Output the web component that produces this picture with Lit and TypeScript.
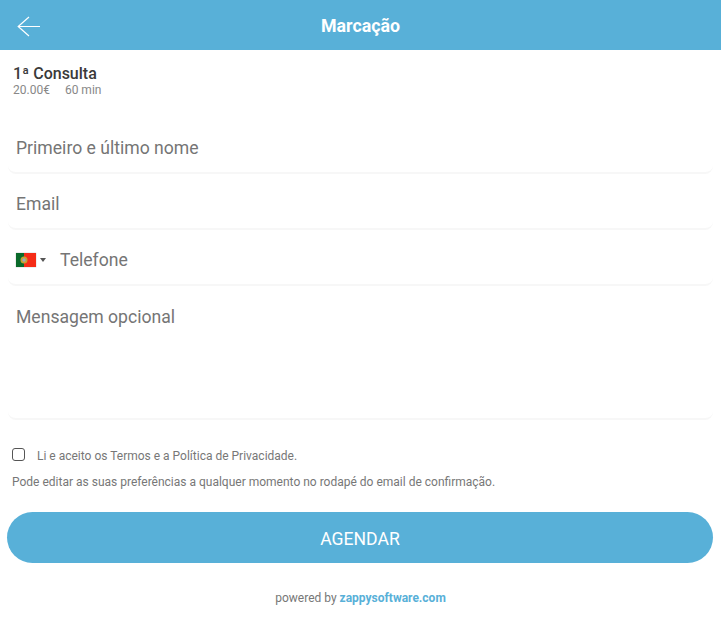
import {customElement} from "lit/decorators.js";
import {css, html, LitElement} from "lit";

@customElement('app-root')
class AppRoot extends LitElement {
    static styles = [css`
        :host {
            display: block;
            font-family: Roboto, "Liberation Sans", sans-serif;
            color: #777;
            background: #fff;
        }
        .topbar {
            height: 50px;
            background: #58b0d8;
            display: flex;
            align-items: center;
            justify-content: center;
            position: relative;
            color: #fff;
            font-size: 17.8px;
            font-weight: 700;
        }
        .back {
            position: absolute;
            left: 17px;
            top: 16px;
            width: 24px;
            height: 21px;
        }
        .service {
            padding: 14px 13px 0;
            height: 55px;
        }
        .service-name {
            font-size: 16px;
            font-weight: 500;
            line-height: 19px;
            color: #3a3a3a;
        }
        .service-meta {
            display: flex;
            gap: 15px;
            font-size: 12px;
            line-height: 14px;
            color: #888;
        }
        .form {
            padding: 0 8px;
            display: flex;
            flex-direction: column;
            gap: 1px;
        }
        .field {
            height: 55px;
            box-sizing: border-box;
            border-bottom: 2px solid #f7f7f7;
            border-radius: 0 0 8px 8px;
            display: flex;
            align-items: center;
            padding: 4px 8px 0;
            font-size: 17.6px;
            color: #757575;
        }
        .phone {
            gap: 5px;
        }
        .flag {
            width: 20px;
            height: 14px;
            display: block;
            box-shadow: 0 0 1px #999;
        }
        .caret {
            width: 0;
            height: 0;
            border-left: 3px solid transparent;
            border-right: 3px solid transparent;
            border-top: 4px solid #555;
            margin: 0 9px 0 -1px;
        }
        .message {
            height: 133px;
            align-items: flex-start;
            padding-top: 20px;
            line-height: 21px;
        }
        .consent {
            display: flex;
            align-items: center;
            padding: 28px 12px 0;
            font-size: 12px;
            line-height: 16px;
        }
        .box {
            width: 13px;
            height: 13px;
            box-sizing: border-box;
            border: 1px solid #555;
            border-radius: 3px;
            margin: 0 12px 3px 0;
        }
        .note {
            padding: 10px 12px 0;
            font-size: 12px;
            line-height: 16px;
        }
        .submit {
            margin: 22px 8px 0 7px;
            height: 51px;
            box-sizing: border-box;
            padding-top: 2px;
            border-radius: 26px;
            background: #58b0d8;
            color: #fff;
            font-size: 17.6px;
            display: flex;
            align-items: center;
            justify-content: center;
        }
        .powered {
            margin-top: 27px;
            text-align: center;
            font-size: 12px;
            line-height: 16px;
        }
        .powered b {
            color: #58b0d8;
            font-weight: 700;
        }
    `];

    protected render(): unknown {
        return html`
            <div class="topbar">
                <svg class="back" viewBox="0 0 24 21" fill="none" stroke="#fff" stroke-width="1.2">
                    <path d="M23 10.5H1.5M12 1 1.2 10.5 12 20"></path>
                </svg>
                Marcação
            </div>
            <div class="service">
                <div class="service-name">1ª Consulta</div>
                <div class="service-meta"><span>20.00€</span><span>60 min</span></div>
            </div>
            <div class="form">
                <div class="field">Primeiro e último nome</div>
                <div class="field">Email</div>
                <div class="field phone">
                    <svg class="flag" viewBox="0 0 20 14">
                        <rect width="20" height="14" fill="#f52c16"></rect>
                        <rect width="8" height="14" fill="#0a6a2a"></rect>
                        <circle cx="8" cy="7" r="3.5" fill="#c8a030"></circle>
                        <circle cx="8" cy="7" r="1.7" fill="#a0a4c0"></circle>
                    </svg>
                    <span class="caret"></span>
                    Telefone
                </div>
                <div class="field message">Mensagem opcional</div>
            </div>
            <div class="consent"><span class="box"></span>Li e aceito os Termos e a Política de Privacidade.</div>
            <div class="note">Pode editar as suas preferências a qualquer momento no rodapé do email de confirmação.</div>
            <div class="submit">AGENDAR</div>
            <div class="powered">powered by <b>zappysoftware.com</b></div>
        `;
    }
}
